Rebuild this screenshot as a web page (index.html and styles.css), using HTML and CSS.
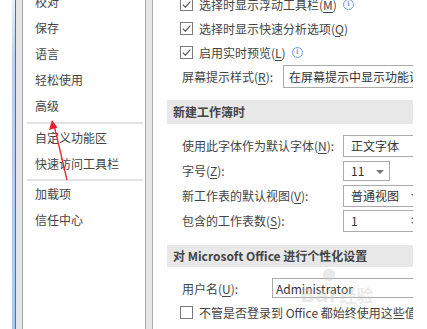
FILE: index.html
```html
<!DOCTYPE html>
<html lang="zh-CN">
<head>
    <meta charset="UTF-8">
    <meta name="viewport" content="width=device-width, initial-scale=1.0">
    <title>Excel 选项</title>
    <link rel="stylesheet" href="styles.css">
</head>
<body>
    <div class="window">
        <div class="edge"></div>
        <div class="edge-blue"></div>
        <div class="edge-gray"></div>

        <!-- left category list -->
        <ul class="nav">
            <li>校对</li>
            <li>保存</li>
            <li>语言</li>
            <li>轻松使用</li>
            <li>高级</li>
            <li class="sep"></li>
            <li>自定义功能区</li>
            <li>快速访问工具栏</li>
            <li class="sep sep-2"></li>
            <li>加载项</li>
            <li>信任中心</li>
        </ul>
        <div class="splitter"></div>

        <!-- options pane -->
        <div class="main">
            <div class="opts">
                <div class="check-row">
                    <span class="box"><svg width="11" height="11" viewBox="0 0 11 11"><path d="M1.8 5.6 L4.3 8.1 L9.3 2.6" fill="none" stroke="#555" stroke-width="1.2"/></svg></span>
                    <span>选择时显示浮动工具栏(<u>M</u>)</span>
                    <span class="info">i</span>
                </div>
                <div class="check-row">
                    <span class="box"><svg width="11" height="11" viewBox="0 0 11 11"><path d="M1.8 5.6 L4.3 8.1 L9.3 2.6" fill="none" stroke="#555" stroke-width="1.2"/></svg></span>
                    <span>选择时显示快速分析选项(<u>Q</u>)</span>
                </div>
                <div class="check-row">
                    <span class="box"><svg width="11" height="11" viewBox="0 0 11 11"><path d="M1.8 5.6 L4.3 8.1 L9.3 2.6" fill="none" stroke="#555" stroke-width="1.2"/></svg></span>
                    <span>启用实时预览(<u>L</u>)</span>
                    <span class="info">i</span>
                </div>
                <div class="field-row">
                    <span class="label label-tip">屏幕提示样式(<u>R</u>):</span>
                    <span class="input wide">在屏幕提示中显示功能说明</span>
                </div>
            </div>

            <div class="section">新建工作簿时</div>
            <div class="form">
                <div class="form-row">
                    <span class="label label-long">使用此字体作为默认字体(<u>N</u>):</span>
                    <span class="input select">正文字体</span>
                </div>
                <div class="form-row">
                    <span class="label label-long">字号(<u>Z</u>):</span>
                    <span class="input small">11<i class="caret"></i></span>
                </div>
                <div class="form-row">
                    <span class="label label-long">新工作表的默认视图(<u>V</u>):</span>
                    <span class="input select">普通视图<i class="caret"></i></span>
                </div>
                <div class="form-row">
                    <span class="label label-long">包含的工作表数(<u>S</u>):</span>
                    <span class="input select">1<i class="spin"><b class="up"></b><b class="down"></b></i></span>
                </div>
            </div>

            <div class="section section-2">对 Microsoft Office 进行个性化设置</div>
            <div class="form user">
                <div class="form-row">
                    <span class="label label-user">用户名(<u>U</u>):</span>
                    <span class="input name">Administrator</span>
                </div>
                <div class="check-row">
                    <span class="box"></span>
                    <span>不管是否登录到 Office 都始终使用这些值</span>
                </div>
            </div>
        </div>
    </div>

    <div class="watermark"><span class="paw">●</span>Bai<span class="wm-cn">经验</span></div>

    <svg class="arrow" width="427" height="329" viewBox="0 0 427 329">
        <line x1="67" y1="180" x2="54.5" y2="127" stroke="#e8232b" stroke-width="1.3"/>
        <polygon points="52,120 49,130 57.5,127.5" fill="#e8232b"/>
    </svg>
</body>
</html>
```

FILE: styles.css
```css
body {
    margin: 0;
    width: 427px;
    height: 329px;
    overflow: hidden;
    background: #fff;
    font-family: "Noto Sans CJK SC", "Microsoft YaHei", sans-serif;
    font-size: 12px;
    color: #444;
}
u {
    text-decoration: underline;
    text-underline-offset: 2px;
}
.window {
    display: flex;
    height: 329px;
}
.edge {
    width: 12px;
    background: #fff;
}
.edge-blue {
    width: 3px;
    background: linear-gradient(#e6f0fb, #b7d4f2 60px, #a9cbf0);
    border-right: 1px solid #5d6d84;
}
.edge-gray {
    width: 6px;
    background: #e6e6e6;
    border-right: 1px solid #a6a6a6;
}
.nav {
    list-style: none;
    margin: -11px 0 0;
    padding: 0;
    width: 122px;
    border-right: 1px solid #acacac;
}
.nav li {
    height: 26px;
    line-height: 26px;
    padding-left: 12px;
    white-space: nowrap;
}
.nav li.sep {
    height: 2px;
    margin: 3px 2px 1px 4px;
    padding: 0;
    background: #e2e2e2;
}
.nav li.sep-2 {
    margin: 2px 2px 0 4px;
}
.splitter {
    width: 6px;
    background: #e6e6e6;
    border-right: 1px solid #acacac;
}
.main {
    width: 246px;
    padding-left: 14px;
    overflow: hidden;
    white-space: nowrap;
}
.opts {
    margin-top: -8px;
}
.check-row {
    display: flex;
    align-items: center;
    height: 24px;
    padding-left: 13px;
}
.box {
    width: 11px;
    height: 11px;
    border: 1px solid #7a7a7a;
    margin-right: 6px;
    display: flex;
    background: #fff;
    flex-shrink: 0;
}
.info {
    width: 9px;
    height: 9px;
    border: 1px solid #6a9ed6;
    border-radius: 50%;
    color: #6a9ed6;
    font-size: 7px;
    line-height: 9px;
    text-align: center;
    font-family: "DejaVu Sans", sans-serif;
    font-weight: bold;
    margin-left: 6px;
    flex-shrink: 0;
}
.field-row, .form-row {
    display: flex;
    align-items: center;
    height: 24px;
    padding-left: 15px;
}
.label {
    flex-shrink: 0;
}
.label-tip {
    width: 101px;
}
.label-long {
    width: 161px;
}
.label-user {
    width: 90px;
}
.input {
    display: flex;
    align-items: center;
    position: relative;
    height: 20px;
    border: 1px solid #ababab;
    padding-left: 5px;
    color: #333;
    box-sizing: border-box;
    flex-shrink: 0;
}
.input.wide {
    width: 140px;
    height: 23px;
}
.input.select {
    width: 80px;
    height: 22px;
    padding-left: 7px;
}
.input.small {
    width: 47px;
    padding-left: 7px;
}
.input.name {
    width: 150px;
    padding-left: 3px;
}
.caret {
    position: absolute;
    right: 5px;
    top: 8px;
    border-left: 4px solid transparent;
    border-right: 4px solid transparent;
    border-top: 4px solid #777;
}
.select .caret {
    right: 3px;
}
.spin {
    position: absolute;
    right: 5px;
    top: 5px;
    display: flex;
    flex-direction: column;
    gap: 3px;
}
.spin b {
    border-left: 3px solid transparent;
    border-right: 3px solid transparent;
}
.spin .up {
    border-bottom: 3px solid #777;
}
.spin .down {
    border-top: 3px solid #777;
}
.section {
    margin-top: 12px;
    height: 24px;
    line-height: 24px;
    padding-left: 6px;
    background: #e8e8e8;
    font-weight: bold;
    color: #444;
}
.form {
    margin-top: 9px;
}
.form .form-row {
    height: 25px;
}
.section-2 {
    height: 22px;
    line-height: 22px;
}
.user {
    margin-top: 9px;
}
.user .form-row {
    height: 24px;
}
.watermark {
    position: absolute;
    left: 300px;
    top: 282px;
    font-family: "DejaVu Sans", sans-serif;
    font-size: 20px;
    font-weight: bold;
    color: rgba(200, 200, 200, 0.4);
    white-space: nowrap;
}
.watermark .paw {
    position: absolute;
    left: 22px;
    top: -18px;
    font-size: 16px;
}
.watermark .wm-cn {
    font-family: "Noto Sans CJK SC", sans-serif;
    font-size: 17px;
    margin-left: 4px;
}
.arrow {
    position: absolute;
    left: 0;
    top: 0;
}
```
